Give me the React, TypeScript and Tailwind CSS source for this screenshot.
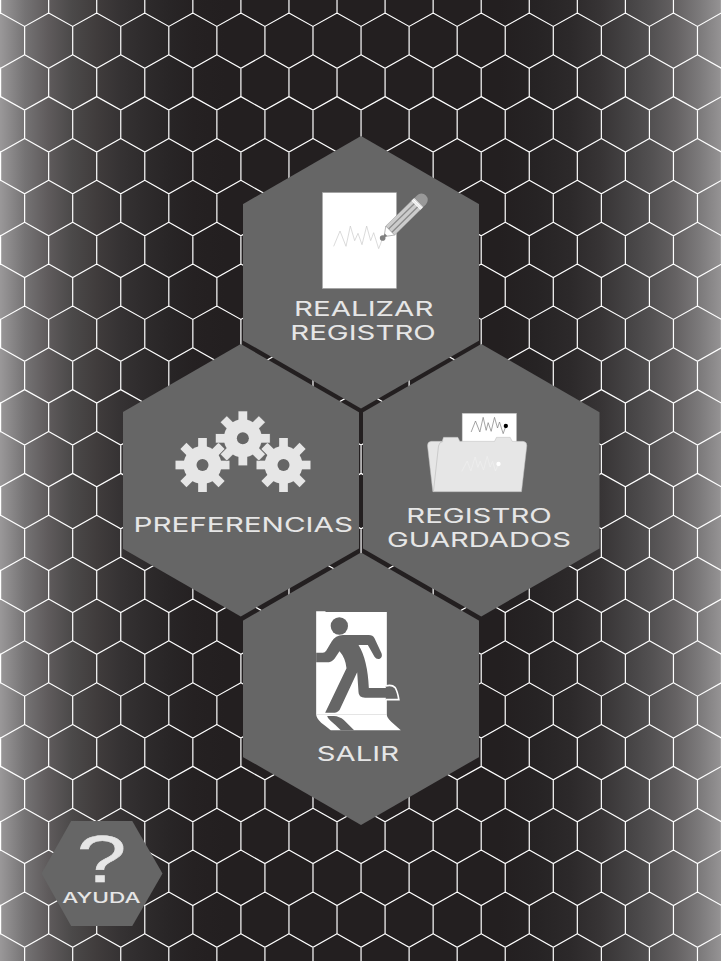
import type { ReactNode } from "react";

const DX = 24.03;
const ROW = 41.86;

function gridPath() {
  const parts: string[] = [];
  for (let r = -1; r < 24; r++) {
    const top = 26.4 + r * ROW;
    const odd = r % 2 === 0;
    for (let c = -1; c < 32; c++) {
      const isOdd = Math.abs(c) % 2 === 1;
      if (isOdd !== odd) continue;
      const x = 0.6 + c * DX;
      parts.push(
        `M${x - DX} ${top - 13.5}L${x} ${top}L${x + DX} ${top - 13.5}M${x} ${top}V${top + 28.36}`
      );
    }
  }
  return parts.join("");
}

function Honeycomb() {
  return (
    <svg className="absolute inset-0" width="721" height="961" viewBox="0 0 721 961">
      <path d={gridPath()} fill="none" stroke="#fff" strokeWidth="1.2" />
    </svg>
  );
}

const WAVE =
  "M161 199L180 153L198 199L211 138L224 182L234 160L246 194L260 138L272 182L281 158L296 206L308 175";

function RecordIcon() {
  return (
    <svg className="mt-[54px] h-[100px] w-full shrink-0" viewBox="-111 30 709.5 300">
      <rect x="127.5" y="38" width="222" height="287" fill="#fff" stroke="#aaa" strokeWidth="2" />
      <path d={WAVE} fill="none" stroke="#c9c9c9" strokeWidth="2" />
      <circle cx="308" cy="174" r="8.5" fill="#808080" />
      <g transform="translate(308 174) rotate(-44.5)">
        <path d="M6 0L32 -19V19Z" fill="#fff" stroke="#999" strokeWidth="2" />
        <path d="M4 -2L14 -5V5L4 2Z" fill="#808080" />
        <rect x="32" y="-19" width="116" height="38" fill="#ccc" stroke="#999" strokeWidth="1.5" />
        <path d="M32 -7H142M32 7H142" stroke="#8c8c8c" strokeWidth="4" />
        <rect x="140" y="-19" width="12" height="38" fill="#fff" />
        <path d="M144 -19V19M149 -19V19" stroke="#bbb" strokeWidth="1.5" />
        <path d="M152 -19H163A19 19 0 0 1 163 19H152Z" fill="#999" />
      </g>
    </svg>
  );
}

const TEETH = [0, 45, 90, 135];

function Gear({ x, y, outline }: { x: number; y: number; outline?: boolean }) {
  return (
    <g transform={`translate(${x} ${y})`}>
      {outline && (
        <g stroke="#777" strokeWidth="3" fill="none">
          <circle r="57" />
          {TEETH.map((a) => (
            <rect key={a} x="-13" y="-81" width="26" height="162" transform={`rotate(${a})`} />
          ))}
        </g>
      )}
      <g fill="#e6e6e6">
        <circle r="57" />
        {TEETH.map((a) => (
          <rect key={a} x="-13" y="-81" width="26" height="162" transform={`rotate(${a})`} />
        ))}
      </g>
      <circle r="18" fill="#666" />
    </g>
  );
}

function GearsIcon() {
  return (
    <svg className="mt-[56px] h-[100px] w-full shrink-0" viewBox="8.5 0 709.5 300">
      <Gear x={247} y={195} />
      <Gear x={490} y={195} />
      <Gear x={368} y={115} outline />
    </svg>
  );
}

function FolderIcon() {
  return (
    <svg className="mt-[56px] h-[100px] w-full shrink-0" viewBox="-20.5 0 709.5 300">
      <rect x="277" y="40" width="163" height="90" fill="#fff" stroke="#bbb" strokeWidth="1.5" />
      <path
        d="M304 96L317 63L330 96L340 52L349 91L355 68L364 94L374 52L383 84L389 66L400 101L408 78"
        fill="none"
        stroke="#777"
        strokeWidth="2"
      />
      <circle cx="408" cy="78" r="6.5" fill="#000" />
      <path
        d="M184 124H217L221 112H264L270 124H374L380 112H421L427 124H460Q471 125 471 137L455 275H189L173 137Q173 125 184 124Z"
        fill="#e6e6e6"
        stroke="#bdbdbd"
        strokeWidth="1.5"
      />
      <path d="M191 273L206 138Q208 126 220 124" fill="none" stroke="#bdbdbd" strokeWidth="2" />
      <path
        d="M276 214L292 183L303 213L316 171L324 202L331 183L341 210L352 169L361 201L368 184L377 213L386 192"
        fill="none"
        stroke="#f0f0f0"
        strokeWidth="2"
      />
      <circle cx="386" cy="192" r="6.5" fill="#fff" />
    </svg>
  );
}

function ExitIcon() {
  return (
    <svg className="mt-[47.5px] h-[135px] w-full shrink-0" viewBox="-140.5 0 709.5 405">
      <path d="M79 34H107V36H291V343H79Z" fill="#fff" />
      <path
        d="M288 258Q306 253 316 263Q323 274 327 299H288"
        fill="#666"
        stroke="#fff"
        strokeWidth="5"
      />
      <circle cx="148.5" cy="78" r="26" fill="#666" />
      <path
        d="M79 158H99Q105 158 109 152L126 124Q136 106 160 105H237Q249 105 254 115L275 160Q279 172 270 176Q260 179 254 170L234 135H206Q233 178 237 264H288Q305 260 311 270L319 293H228Q206 294 206 276L202 217L152 324Q147 337 135 338H106L170 205Q167 174 149 154L134 176Q126 187 110 187H79Z"
        fill="#666"
      />
      <path d="M79 343H291Q290 353 305 366L333 391H123Q119 387 94 368Q79 355 79 343Z" fill="#fff" />
      <path d="M79 343.5H291" stroke="#e6e6e6" strokeWidth="2" />
      <path d="M112 348H132Q149 349 162 360L193 391H153Q137 374 122 362Q113 355 112 348Z" fill="#666" />
    </svg>
  );
}

function Tile({ children }: { children: ReactNode }) {
  return (
    <button className="flex h-[272.5px] w-[236.5px] flex-col items-center bg-[#666] text-[20.6px] leading-6 font-normal whitespace-nowrap text-[#e6e6e6] [clip-path:polygon(50%_0,100%_25%,100%_75%,50%_100%,0_75%,0_25%)]">
      {children}
    </button>
  );
}

export default function App() {
  return (
    <main className="relative h-[961px] w-[721px] overflow-hidden bg-[linear-gradient(90deg,#9a9899_0px,#757374_25px,#5f5b5c_48px,#4b4949_72px,#403c3c_97px,#353233_121px,#2e2b2c_145px,#282526_170px,#252122_193px,#231f20_225px,#231f20_500px,#262324_535px,#2c292a_570px,#373435_601px,#454344_628px,#535152_652px,#656263_676px,#7c7a7b_700px,#959394_721px)] font-['Inter','Liberation_Sans',sans-serif]">
      <Honeycomb />
      <nav className="relative flex flex-col items-center pt-[136px] pl-[1px]">
        <Tile>
          <RecordIcon />
          <span className="mt-[6.5px] ml-[5px] block scale-x-[1.43]">REALIZAR</span>
          <span className="ml-[4px] block scale-x-[1.425]">REGISTRO</span>
        </Tile>
        <div className="-mt-[64.5px] flex gap-[4px]">
          <Tile>
            <GearsIcon />
            <span className="mt-[13px] ml-[4px] block scale-x-[1.44]">PREFERENCIAS</span>
          </Tile>
          <Tile>
            <FolderIcon />
            <span className="mt-[3.7px] mr-[4px] block scale-x-[1.425]">REGISTRO</span>
            <span className="mr-[5px] block scale-x-[1.415]">GUARDADOS</span>
          </Tile>
        </div>
        <div className="-mt-[64px]">
          <Tile>
            <ExitIcon />
            <span className="mt-[7px] mr-[6px] block scale-x-[1.42]">SALIR</span>
          </Tile>
        </div>
      </nav>
      <button className="relative -mt-[4px] ml-[41.5px] flex h-[105px] w-[121px] flex-col items-center bg-[#666] text-[#e6e6e6] [clip-path:polygon(24.5%_0,75%_0,100%_50%,75%_100%,24.5%_100%,0_50%)]">
        <span className="mt-[11px] mr-[1px] block h-[54px] scale-x-[1.33] font-['Liberation_Sans',sans-serif] text-[67px] leading-[54px] [-webkit-text-stroke:0.6px_#e6e6e6]">?</span>
        <span className="mr-[1px] block h-6 scale-x-[1.54] text-[14.7px] leading-6 font-medium">AYUDA</span>
      </button>
    </main>
  );
}
